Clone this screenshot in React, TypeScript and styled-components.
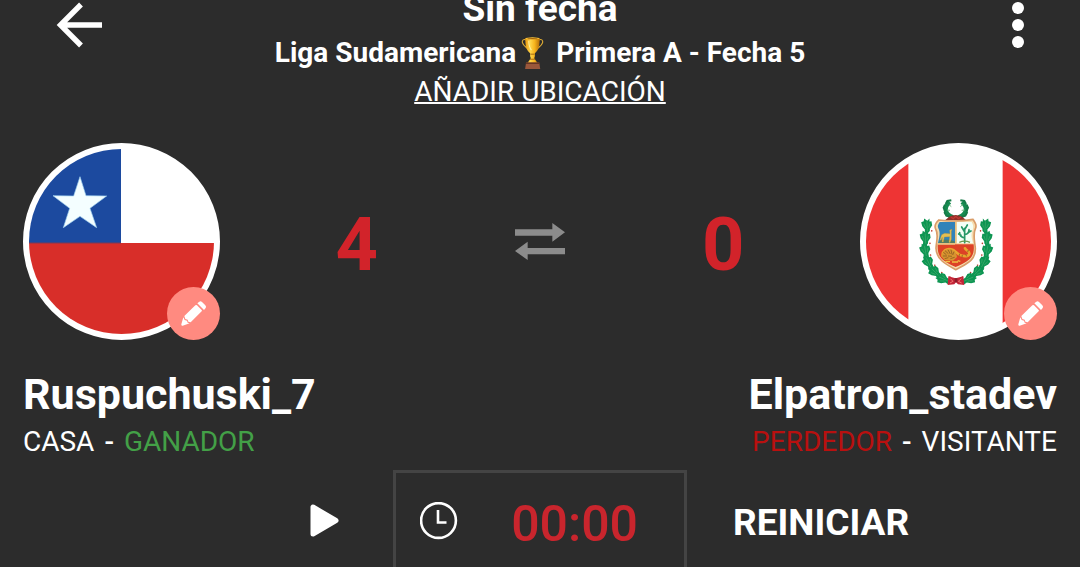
import React from "react";
import styled, { createGlobalStyle } from "styled-components";

const GlobalStyle = createGlobalStyle`
  * { box-sizing: border-box; }
  body {
    margin: 0;
    background: #2c2c2c;
    color: #fff;
    font-family: Roboto, "Liberation Sans", sans-serif;
  }
  button {
    margin: 0;
    padding: 0;
    border: 0;
    background: none;
    color: inherit;
    font: inherit;
    cursor: pointer;
  }
  svg { display: block; }
`;

const Page = styled.main`
  min-height: 100vh;
  overflow: hidden;
  display: flex;
  flex-direction: column;
`;

const Header = styled.header`
  display: grid;
  grid-template-columns: 1fr auto 1fr;
  align-items: start;
  padding: 0 55px;
`;

const HeaderButton = styled.button<{ $side: "start" | "end" }>`
  justify-self: ${(p) => p.$side};
  height: 50px;
`;

const Heading = styled.div`
  display: flex;
  flex-direction: column;
  align-items: center;
  text-align: center;
`;

const Title = styled.h1`
  margin: -14px 0 0;
  font-size: 37px;
  line-height: 46px;
  font-weight: 700;
`;

const League = styled.p`
  margin: 0;
  font-size: 28px;
  line-height: 42px;
  font-weight: 700;
`;

const TrophySvg = styled.svg`
  display: inline-block;
  margin: 0 5px;
  vertical-align: -7px;
`;

const LocationLink = styled.a`
  color: inherit;
  font-size: 28px;
  line-height: 36px;
  text-decoration: underline;
  text-decoration-thickness: 2px;
`;

const Scoreboard = styled.section`
  display: grid;
  grid-template-columns: auto 1fr auto;
  align-items: center;
  padding: 33px 23px 0;
`;

const Avatar = styled.div`
  position: relative;
  width: 197px;
  height: 197px;
  border: 6px solid #fff;
  border-radius: 50%;
  background: #fff;
`;

const FlagSvg = styled.svg`
  width: 100%;
  height: 100%;
  border-radius: 50%;
`;

const EditButton = styled.button`
  position: absolute;
  right: -6px;
  bottom: -6px;
  width: 53px;
  height: 53px;
  border-radius: 50%;
  background: #ff8a80;
`;

const Scores = styled.div`
  display: grid;
  grid-template-columns: repeat(3, 1fr);
  align-items: center;
  justify-items: center;
  padding: 0 45px;
`;

const Score = styled.strong`
  padding-top: 6px;
  font-size: 74px;
  line-height: 84px;
  font-weight: 700;
  color: #d2232a;
`;

const Teams = styled.section`
  display: flex;
  justify-content: space-between;
  padding: 27px 23px 0;
`;

const Team = styled.div<{ $align: "flex-start" | "flex-end" }>`
  display: flex;
  flex-direction: column;
  align-items: ${(p) => p.$align};
`;

const TeamName = styled.h2`
  margin: 0;
  font-size: 43px;
  line-height: 54px;
  font-weight: 700;
`;

const Status = styled.p`
  display: flex;
  gap: 10px;
  margin: 0;
  font-size: 28px;
  line-height: 42px;
`;

const Dash = styled.span`
  font-weight: 500;
`;

const Result = styled.span<{ $won?: boolean }>`
  color: ${(p) => (p.$won ? "#43a047" : "#b9100f")};
`;

const Controls = styled.section`
  display: grid;
  grid-template-columns: 1fr 294px 1fr;
  flex: 1;
  min-height: 97px;
  margin-top: 7px;
`;

const PlayButton = styled.button`
  justify-self: end;
  align-self: start;
  margin: 34px 54px 0 0;
`;

const Timer = styled.div`
  display: flex;
  justify-content: space-between;
  align-items: flex-start;
  padding: 22px 46px 0 24px;
  border: 3px solid #444;
  border-bottom: 0;
`;

const ClockSvg = styled.svg`
  margin-top: 7px;
`;

const Time = styled.time`
  font-size: 50px;
  line-height: 58px;
  font-weight: 500;
  color: #c9252d;
`;

const ResetButton = styled.button`
  justify-self: start;
  align-self: start;
  margin: 31px 0 0 46px;
  font-size: 37px;
  line-height: 44px;
  font-weight: 700;
`;

const BackIcon = () => (
  <svg width="48" height="50" viewBox="0 0 48 50" fill="none" stroke="#fff" strokeWidth="5.4" aria-hidden="true">
    <path d="M26 4.5 5.5 25 26 45.5M6 25H47" />
  </svg>
);

const MoreIcon = () => (
  <svg width="14" height="50" viewBox="0 0 14 50" fill="#fff" aria-hidden="true">
    <circle cx="7" cy="8" r="6" />
    <circle cx="7" cy="25" r="6" />
    <circle cx="7" cy="42" r="6" />
  </svg>
);

const Trophy = () => (
  <TrophySvg width="23" height="32" viewBox="0 0 66 95" role="img" aria-label="Trofeo">
    <defs>
      <linearGradient id="gold" x1="0" x2="1">
        <stop offset="0" stopColor="#e89a12" />
        <stop offset=".35" stopColor="#ffd54a" />
        <stop offset=".65" stopColor="#f7b41c" />
        <stop offset="1" stopColor="#b96f08" />
      </linearGradient>
    </defs>
    <path d="M15 9C7 5 1 9 3 17c3 11 14 13 21 23M51 9c8-4 14 0 12 8-3 11-14 13-21 23" fill="none" stroke="#e0ae35" strokeWidth="3.4" />
    <path d="M12 3h42c1 22-3 37-14 45v9l-2 6 10 14H18l10-14-2-6v-9C15 40 11 25 12 3Z" fill="url(#gold)" />
    <ellipse cx="33" cy="4" rx="21" ry="3" fill="#ffca3a" />
    <ellipse cx="33" cy="5" rx="16" ry="1.8" fill="#a7650c" />
    <path d="M22 11c0 13 3 22 8 28" fill="none" stroke="#fff0a0" strokeWidth="3" />
    <path d="M27 51h12M25 66h16" stroke="#9b5b08" strokeWidth="2.5" />
    <path d="M14 76h39l3 19H11Z" fill="#9a573b" />
    <path d="M14 76h39l1 4H13Z" fill="#653522" />
  </TrophySvg>
);

const PencilIcon = () => (
  <svg width="53" height="53" viewBox="0 0 159 159" fill="#fff" aria-hidden="true">
    <path d="m52 87 33-32q3-2 5 0l14 14q2 2 0 4L71 106l-7-2-2-6-7-2Z" />
    <path d="m91 49 6-5q4-3 8 1l10 10q4 5 1 8l-5 6Z" />
    <path d="m49 91 4 8 7 2 2 6 6 2-21 7q-5 1-4-4Z" />
  </svg>
);

const SwapIcon = () => (
  <svg width="50" height="37" viewBox="0 0 150 111" fill="#8c8c8c" aria-hidden="true">
    <path d="M0 19h112V0l38 28-38 28V38H0ZM150 94H38v17L0 84l38-28v19h112Z" />
  </svg>
);

const PlayIcon = () => (
  <svg width="29" height="33" viewBox="0 0 29 33" aria-hidden="true">
    <path d="M3 3v27L26 16.5Z" fill="#fff" stroke="#fff" strokeWidth="5" strokeLinejoin="round" />
  </svg>
);

const ClockIcon = () => (
  <ClockSvg width="38" height="38" viewBox="0 0 38 38" fill="none" stroke="#fff" strokeWidth="2.6" aria-hidden="true">
    <circle cx="18.5" cy="18.5" r="17.4" />
    <path d="M18 8v12.5h8.5" />
  </ClockSvg>
);

const ChileFlag = () => (
  <FlagSvg viewBox="0 0 185 185" role="img" aria-label="Chile">
    <path fill="#fff" d="M0 0h185v185H0z" />
    <path fill="#1c4a9f" d="M0 0h92v94H0z" />
    <path fill="#d82e29" d="M0 94h185v91H0z" />
    <path fill="#7c3955" d="M0 93.5h92v1H0z" />
    <path
      transform="translate(-19 -19) scale(.3333)"
      fill="#f4feff"
      stroke="#9fd0ee"
      strokeWidth="2"
      d="m210 140 18 57 62 1-50 37 20 58-50-34-50 34 19-58-50-38 62 1Z"
    />
  </FlagSvg>
);

/* Leaves of the right-hand branch, from the top of the wreath to the ribbon. */
const leaves = [
  [225, 110, 6],
  [230, 147, 4],
  [230, 184, 12],
  [220, 219, 28],
  [200, 247, 48],
  [175, 267, 68],
];

const Branch = () => (
  <g>
    <path d="M225 100c12 65 8 138-74 175" fill="none" stroke="#4f7a3c" strokeWidth="3" />
    {leaves.map(([x, y, turn]) => (
      <g key={y} transform={`translate(${x} ${y}) rotate(${turn})`}>
        <path
          d="M-9-24-2-18 7-25 9-17 17-15 15-3 8 8 10 17 1 20-6 14-7 7-15-3-14-15-8-15Z"
          fill="#0d9552"
        />
        <path d="m0-16 1 30M-9-9-4 3M10-10 5 4" stroke="#4db273" strokeWidth="1.6" />
        <circle cx="-12" cy="14" r="2.4" fill="#c0392b" />
      </g>
    ))}
  </g>
);

const Laurel = () => (
  <g transform="translate(0 8)">
    <g fill="none" stroke="#168a50" strokeWidth="13">
      <path d="M119 28c-18 16-16 36 10 46" />
      <path d="M156 28c18 16 16 36-10 46" />
    </g>
    <path
      d="m124 23-12 2-5 9M105 36l-4 9 5 11M103 58l6 11 11 3M151 23l12 2 5 9M170 36l4 9-5 11M172 58l-6 11-11 3"
      fill="none"
      stroke="#167b48"
      strokeWidth="6"
    />
    <path d="m117 36 7 6M111 52l9 1M158 36l-7 6M164 52l-9 1" stroke="#75ba83" strokeWidth="3" />
    <path d="M117 73q20-12 40 0l12 10h-64Z" fill="#8f3029" />
    <path d="m122 73 8 5 7-7 8 7 8-5" fill="none" stroke="#c03a32" strokeWidth="4" />
  </g>
);

const Shield = () => (
  <g transform="translate(0 8)">
    <path
      d="M87 82q50 7 102-2c7 11 12 18 7 29-8 16-2 36 0 58 1 38-27 46-59 64-31-17-58-31-59-64 1-23 9-41-1-58-5-10 1-19 10-27Z"
      fill="#f7ddb0"
      stroke="#d99d69"
      strokeWidth="5"
    />
    <path d="M89 88h46v63H84c4-17 8-30 1-44-3-7-1-12 4-19Z" fill="#3183b9" />
    <path d="M140 88h45c7 12 5 18 2 27-5 13-1 24 2 36h-49Z" fill="#f4fff6" />
    <path d="M83 155h108c4 38-11 49-54 68-43-18-56-32-54-68Z" fill="#dd4226" />
    <path d="M84 151h51v5H83ZM135 87h5v66h-5Z" fill="#e6c180" />
    <path d="M89 144q18-8 45 2v5H86Z" fill="#517d62" />
    <path
      d="m119 112 7-2-2 6v24l-4 10-3-1 2-17-16 1-3 15h-4l1-14-4 9-3-2 5-15 9-4 16 1Z"
      fill="#e6bf50"
      stroke="#b3913f"
      strokeWidth="1"
    />
    <path
      d="M164 150v-43M164 136c-14-3-15-9-15-16M164 126c11-2 13-8 13-15M164 118l-9-15M164 111l8-14M153 128l-7-4M176 119l7-4"
      fill="none"
      stroke="#269867"
      strokeWidth="5"
      strokeLinecap="round"
    />
    <path d="M148 149q16-7 32 0" fill="none" stroke="#6b9a4d" strokeWidth="4" />
    <path
      d="M98 190c-2-15 12-24 26-20 9 2 15 10 24 16 15 8 32 5 30-5-1-8-10-6-13-14"
      fill="none"
      stroke="#e9a52f"
      strokeWidth="8"
      strokeLinecap="round"
    />
    <path d="M95 192q3-25 26-22 17 4 20 23l-12 11-25-1Z" fill="#d79330" />
    <path
      d="m100 179 9 7M105 174l10 9M114 171l7 13M123 171l3 14M132 177l-4 10M99 190h12M114 190l12 1M104 198l11-3M121 198l13-4M149 183l-2 8M157 187l-1 7M167 185l3 6M171 176l6-2"
      fill="none"
      stroke="#8a5a20"
      strokeWidth="2.4"
    />
    <path d="M106 207h14M126 208h18M143 204l8 2" stroke="#efc045" strokeWidth="4" />
  </g>
);

const CoatOfArms = () => (
  <g transform="translate(44 41) scale(.3333)">
    <Branch />
    <g transform="translate(277 0) scale(-1 1)">
      <Branch />
    </g>
    <Laurel />
    <Shield />
    <path d="m115 259 19 5 6 0 20-5 3 26-19-2-6-6-5 6-20 2Z" fill="#c32538" />
    <path d="m121 266 8 8-9 5M154 266l-9 8 10 5" fill="none" stroke="#ef7772" strokeWidth="3" />
    <path d="M134 265h8v12h-8Z" fill="#8b1d2a" />
  </g>
);

const PeruFlag = () => (
  <FlagSvg viewBox="0 0 185 185" role="img" aria-label="Perú">
    <path fill="#fff" d="M0 0h185v185H0z" />
    <path fill="#ee3434" d="M0 0h42v185H0zM137 0h48v185h-48z" />
    <path fill="#f9b5b5" d="M42 0h1v185h-1zM136 0h1v185h-1z" />
    <CoatOfArms />
  </FlagSvg>
);

export default function App() {
  return (
    <Page>
      <GlobalStyle />
      <Header>
        <HeaderButton type="button" $side="start" aria-label="Volver">
          <BackIcon />
        </HeaderButton>
        <Heading>
          <Title>Sin fecha</Title>
          <League>
            Liga Sudamericana
            <Trophy /> Primera A - Fecha 5
          </League>
          <LocationLink href="#ubicacion">AÑADIR UBICACIÓN</LocationLink>
        </Heading>
        <HeaderButton type="button" $side="end" aria-label="Más opciones">
          <MoreIcon />
        </HeaderButton>
      </Header>

      <Scoreboard>
        <Avatar>
          <ChileFlag />
          <EditButton type="button" aria-label="Editar equipo de casa">
            <PencilIcon />
          </EditButton>
        </Avatar>
        <Scores>
          <Score>4</Score>
          <button type="button" aria-label="Intercambiar">
            <SwapIcon />
          </button>
          <Score>0</Score>
        </Scores>
        <Avatar>
          <PeruFlag />
          <EditButton type="button" aria-label="Editar equipo visitante">
            <PencilIcon />
          </EditButton>
        </Avatar>
      </Scoreboard>

      <Teams>
        <Team $align="flex-start">
          <TeamName>Ruspuchuski_7</TeamName>
          <Status>
            <span>CASA</span>
            <Dash>-</Dash>
            <Result $won>GANADOR</Result>
          </Status>
        </Team>
        <Team $align="flex-end">
          <TeamName>Elpatron_stadev</TeamName>
          <Status>
            <Result>PERDEDOR</Result>
            <Dash>-</Dash>
            <span>VISITANTE</span>
          </Status>
        </Team>
      </Teams>

      <Controls>
        <PlayButton type="button" aria-label="Iniciar">
          <PlayIcon />
        </PlayButton>
        <Timer>
          <ClockIcon />
          <Time>00:00</Time>
        </Timer>
        <ResetButton type="button">REINICIAR</ResetButton>
      </Controls>
    </Page>
  );
}
